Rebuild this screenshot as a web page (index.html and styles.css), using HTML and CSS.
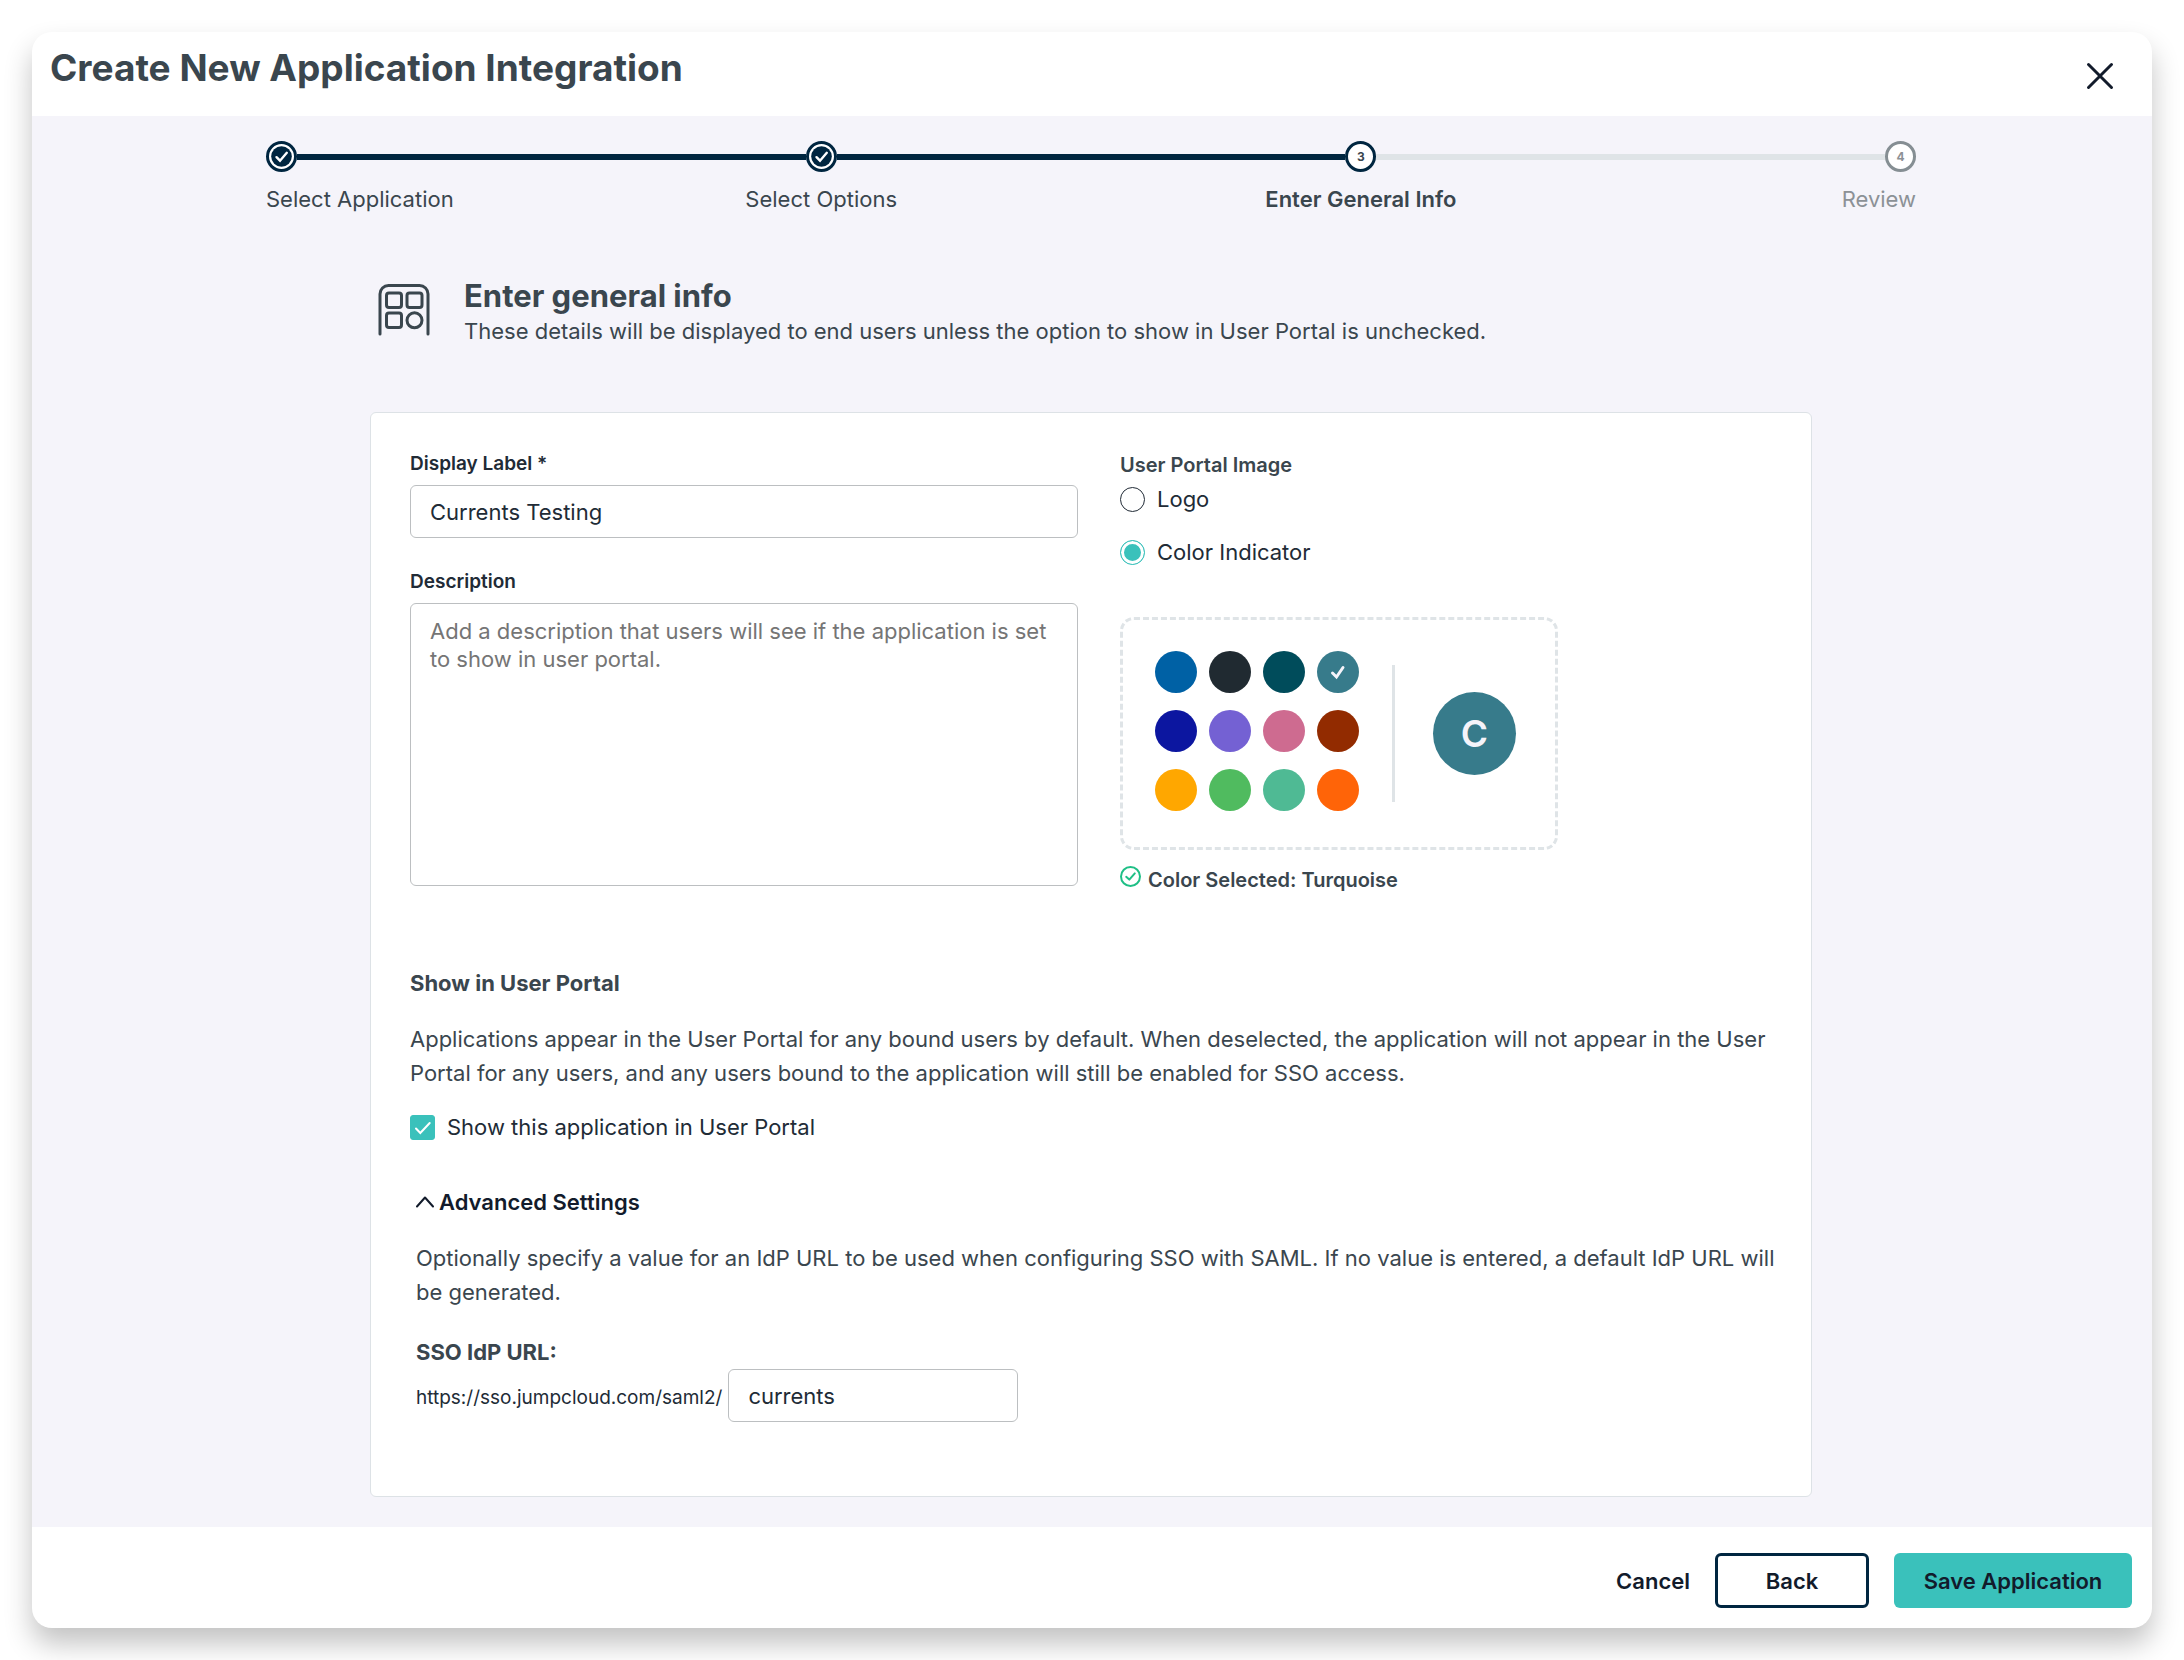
FILE: index.html
```html
<!DOCTYPE html>
<html lang="en">
<head>
<meta charset="utf-8">
<meta name="viewport" content="width=device-width, initial-scale=1">
<title>Create New Application Integration</title>
<link rel="stylesheet" href="styles.css">
</head>
<body>
<form class="modal" onsubmit="return false">
  <header class="modal-header">
    <h1 class="modal-title">Create New Application Integration</h1>
    <button class="close-button" type="button" aria-label="Close">
      <svg width="28" height="28" viewBox="0 0 28 28" fill="none" stroke="currentColor" stroke-width="3" stroke-linecap="round" aria-hidden="true"><path d="M2.500 2.500 25.500 25.500M25.500 2.500 2.500 25.500"/></svg>
    </button>
  </header>

  <main class="modal-body">
    <ol class="stepper">
      <li class="step step-done">
        <svg class="step-dot" viewBox="0 0 31 31" aria-hidden="true"><circle cx="15.500" cy="15.500" r="14" fill="#fff" stroke="#002640" stroke-width="3"/><circle cx="15.500" cy="15.500" r="10.300" fill="#002640"/><path d="M10.500 16.200 14 19.700 20.800 11.800" fill="none" stroke="#fff" stroke-width="2.400" stroke-linecap="round"/></svg>
        <span class="step-label">Select Application</span>
      </li>
      <li class="connector connector-done" aria-hidden="true"></li>
      <li class="step step-done">
        <svg class="step-dot" viewBox="0 0 31 31" aria-hidden="true"><circle cx="15.500" cy="15.500" r="14" fill="#fff" stroke="#002640" stroke-width="3"/><circle cx="15.500" cy="15.500" r="10.300" fill="#002640"/><path d="M10.500 16.200 14 19.700 20.800 11.800" fill="none" stroke="#fff" stroke-width="2.400" stroke-linecap="round"/></svg>
        <span class="step-label">Select Options</span>
      </li>
      <li class="connector connector-done" aria-hidden="true"></li>
      <li class="step step-current" aria-current="step">
        <span class="step-dot">3</span>
        <span class="step-label">Enter General Info</span>
      </li>
      <li class="connector" aria-hidden="true"></li>
      <li class="step step-upcoming">
        <span class="step-dot">4</span>
        <span class="step-label">Review</span>
      </li>
    </ol>

    <div class="content">
      <div class="intro">
        <svg class="intro-icon" viewBox="0 0 52 52" fill="none" stroke="currentColor" stroke-width="3" stroke-linecap="round" aria-hidden="true"><path d="M2 50V10a8.500 8.500 0 0 1 8.500-8.500h31A8.500 8.500 0 0 1 50 10v40"/><rect x="8.500" y="9" width="15" height="14.500" rx="2.500"/><rect x="29" y="9" width="15" height="14.500" rx="2.500"/><rect x="8.500" y="29" width="15" height="14.500" rx="2.500"/><circle cx="36.500" cy="36.300" r="7.500"/></svg>
        <div>
          <h2 class="intro-title">Enter general info</h2>
          <p class="intro-text">These details will be displayed to end users unless the option to show in User Portal is unchecked.</p>
        </div>
      </div>

      <div class="card">
        <div class="columns">
          <div class="column">
            <div class="field">
              <label class="field-label" for="display-label">Display Label *</label>
              <input class="text-input" id="display-label" type="text" value="Currents Testing" required>
            </div>
            <div class="field">
              <label class="field-label" for="description">Description</label>
              <textarea class="text-input text-area" id="description" placeholder="Add a description that users will see if the application is set to show in user portal."></textarea>
            </div>
          </div>

          <div class="column portal-image">
            <fieldset class="choices">
              <legend class="field-label choices-legend">User Portal Image</legend>
              <label class="choice"><input class="radio" type="radio" name="portal-image">Logo</label>
              <label class="choice"><input class="radio" type="radio" name="portal-image" checked>Color Indicator</label>
            </fieldset>
            <div class="color-picker">
              <div class="swatches" role="radiogroup" aria-label="Color">
                <input class="swatch blue" type="radio" name="color" aria-label="Blue">
                <input class="swatch charcoal" type="radio" name="color" aria-label="Charcoal">
                <input class="swatch teal" type="radio" name="color" aria-label="Teal">
                <input class="swatch turquoise" type="radio" name="color" aria-label="Turquoise" checked>
                <input class="swatch navy" type="radio" name="color" aria-label="Navy">
                <input class="swatch purple" type="radio" name="color" aria-label="Purple">
                <input class="swatch pink" type="radio" name="color" aria-label="Pink">
                <input class="swatch brown" type="radio" name="color" aria-label="Brown">
                <input class="swatch yellow" type="radio" name="color" aria-label="Yellow">
                <input class="swatch green" type="radio" name="color" aria-label="Green">
                <input class="swatch mint" type="radio" name="color" aria-label="Mint">
                <input class="swatch orange" type="radio" name="color" aria-label="Orange">
              </div>
              <div class="color-preview"><span class="avatar turquoise">C</span></div>
            </div>
            <p class="color-status">
              <svg width="21" height="21" viewBox="0 0 21 21" fill="none" stroke="#1fbf86" stroke-width="2" stroke-linecap="round" stroke-linejoin="round" aria-hidden="true"><circle cx="10.500" cy="10.500" r="9.500"/><path d="M6.200 10.800 9.300 13.600 14.800 7.400"/></svg>
              <span>Color Selected: Turquoise</span>
            </p>
          </div>
        </div>

        <section class="portal">
          <h3 class="section-title">Show in User Portal</h3>
          <p class="section-text">Applications appear in the User Portal for any bound users by default. When deselected, the application will not appear in the User Portal for any users, and any users bound to the application will still be enabled for SSO access.</p>
          <label class="choice"><input class="checkbox" type="checkbox" checked>Show this application in User Portal</label>
        </section>

        <section class="advanced">
          <button class="disclosure" type="button" aria-expanded="true">
            <svg width="18" height="12" viewBox="0 0 18 12" fill="none" stroke="currentColor" stroke-width="2" stroke-linecap="round" stroke-linejoin="round" aria-hidden="true"><path d="M1 10.500 9 1.500 17 10.500"/></svg>
            Advanced Settings
          </button>
          <p class="section-text">Optionally specify a value for an IdP URL to be used when configuring SSO with SAML. If no value is entered, a default IdP URL will be generated.</p>
          <label class="section-title url-label" for="idp-url">SSO IdP URL:</label>
          <div class="url-row">
            <span class="url-prefix">https://sso.jumpcloud.com/saml2/</span>
            <input class="text-input url-input" id="idp-url" type="text" value="currents">
          </div>
        </section>
      </div>
    </div>
  </main>

  <footer class="modal-footer">
    <button class="button" type="button">Cancel</button>
    <button class="button button-outline" type="button">Back</button>
    <button class="button button-primary" type="submit">Save Application</button>
  </footer>
</form>
</body>
</html>
```
FILE: styles.css
```css
* { box-sizing: border-box; }

body {
  margin: 0;
  padding: 32px;
  background: #fff;
  color: #3a464e;
  font: 400 22px/34px Inter, "Liberation Sans", sans-serif;
}

h1, h2, h3, p, ol, fieldset { margin: 0; padding: 0; border: 0; }

button, input, textarea { font: inherit; color: inherit; }

.modal {
  display: flex;
  flex-direction: column;
  min-height: calc(100vh - 64px);
  border-radius: 20px;
  background: #fff;
  box-shadow: 0 16px 28px rgba(0, 0, 0, .24);
  overflow: hidden;
}

.modal-header {
  display: flex;
  align-items: flex-start;
  justify-content: space-between;
  min-height: 84px;
  padding: 12px 38px 0 18px;
}

.modal-title { font-size: 37px; font-weight: 700; line-height: 48px; }

.close-button {
  display: flex;
  margin-top: 18px;
  padding: 0;
  border: 0;
  background: none;
  color: #121b2b;
  cursor: pointer;
}

.modal-body {
  flex: 1;
  padding: 25px 26px 30px 24px;
  background: #f5f4fa;
}

/* Progress steps */
.stepper {
  display: flex;
  max-width: 1650px;
  margin: 0 auto;
  list-style: none;
}

.step {
  display: flex;
  flex-direction: column;
  align-items: center;
  gap: 10px;
  width: 31px;
  white-space: nowrap;
}

.step:first-child { align-items: flex-start; }
.step:last-child { align-items: flex-end; }

.step-dot { flex: none; width: 31px; height: 31px; }

span.step-dot {
  border: 3px solid #002640;
  border-radius: 50%;
  background: #fff;
  font-size: 12px;
  font-weight: 700;
  line-height: 26px;
  text-align: center;
}

.step-current .step-label { font-weight: 600; }
.step-upcoming { color: #8c9196; }
.step-upcoming .step-dot { border-color: #858e93; }

.connector { flex: 1; height: 6px; margin-top: 13px; background: #dfe4e7; }
.connector-done { background: #002640; }

/* Page introduction */
.content { max-width: 1442px; margin: 0 auto; }

.intro {
  display: flex;
  gap: 34px;
  padding: 62px 8px;
}

.intro-icon { flex: none; width: 52px; height: 52px; margin-top: 6px; }
.intro-title { font-size: 31px; font-weight: 700; line-height: 36px; }
.intro-text { padding-bottom: 2px; }

.card {
  padding: 34px 30px 74px 39px;
  border: 1px solid #dde2e6;
  border-radius: 6px;
  background: #fff;
}

.columns { display: grid; grid-template-columns: 668fr 661fr; gap: 42px; }

/* Form fields */
.field { display: flex; flex-direction: column; gap: 5px; }
.field + .field { margin-top: 27px; }

.field-label {
  color: #212b36;
  font-size: 19px;
  font-weight: 600;
  line-height: 33px;
}

.text-input {
  width: 100%;
  height: 53px;
  padding: 0 19px;
  border: 1px solid #bcbfc1;
  border-radius: 6px;
  background: #fff;
  color: #212b36;
}

.text-area {
  display: block;
  height: 283px;
  padding: 13px 19px;
  line-height: 28px;
  resize: none;
}

.text-area::placeholder { color: #757575; opacity: 1; }

.portal-image { padding-top: 2px; }

.choices-legend { padding: 0; color: #3a464e; font-size: 20px; }

.choice { display: flex; align-items: center; gap: 12px; color: #212b36; }
.choice + .choice { margin-top: 19px; }

.radio, .checkbox, .swatch { flex: none; appearance: none; margin: 0; }

.radio {
  width: 25px;
  height: 25px;
  border: 1px solid #212b36;
  border-radius: 50%;
  background: #fff;
}

.radio:checked {
  border-color: #3ac1bb;
  background: #3ac1bb;
  box-shadow: inset 0 0 0 3px #fff;
}

.checkbox { width: 25px; height: 25px; border: 1px solid #212b36; border-radius: 3px; }

.checkbox:checked {
  border-color: #3ac1bb;
  background: #3ac1bb url("data:image/svg+xml,%3Csvg xmlns='http://www.w3.org/2000/svg' viewBox='0 0 23 23'%3E%3Cpath d='M5 12.500 9.300 17 18.700 7' fill='none' stroke='white' stroke-width='2' stroke-linecap='round'/%3E%3C/svg%3E") center / 100% no-repeat;
}

/* Colour indicator */
.color-picker {
  display: flex;
  align-items: center;
  width: 438px;
  height: 233px;
  margin-top: 48px;
  padding: 0 32px;
  border: 3px dashed #dfe4e7;
  border-radius: 14px;
}

.swatches {
  display: grid;
  grid-template-columns: repeat(4, 42px);
  gap: 17px 12px;
  padding-bottom: 5px;
}

.swatch { width: 42px; height: 42px; border-radius: 50%; }

.swatch:checked {
  background-image: url("data:image/svg+xml,%3Csvg xmlns='http://www.w3.org/2000/svg' viewBox='0 0 42 42'%3E%3Cpath d='M15.500 22 19.500 26 26 16.500' fill='none' stroke='%23f5f4fa' stroke-width='3' stroke-linecap='round'/%3E%3C/svg%3E");
}

.color-preview {
  display: flex;
  align-items: center;
  height: 137px;
  margin-left: 33px;
  padding-left: 38px;
  border-left: 3px solid #dfe4e7;
}

.avatar {
  width: 83px;
  height: 83px;
  border-radius: 50%;
  color: #f5f4fa;
  font-size: 37px;
  font-weight: 600;
  line-height: 83px;
  text-align: center;
}

.blue { background-color: #0061a5; }
.charcoal { background-color: #202a31; }
.teal { background-color: #004c5b; }
.turquoise { background-color: #377b8b; }
.navy { background-color: #0c16a0; }
.purple { background-color: #7461d3; }
.pink { background-color: #ce6b90; }
.brown { background-color: #922b00; }
.yellow { background-color: #ffa700; }
.green { background-color: #50bb5f; }
.mint { background-color: #4fba94; }
.orange { background-color: #ff6408; }

.color-status {
  display: flex;
  gap: 7px;
  margin-top: 16px;
  font-size: 20px;
  font-weight: 600;
  line-height: 29px;
}

/* Portal visibility and advanced settings */
.portal { margin-top: 71px; }
.section-title { font-size: 22px; font-weight: 700; line-height: 34px; }
.section-text { margin: 22px 0 20px; }

.advanced { margin-top: 41px; padding-left: 6px; }

.disclosure {
  display: flex;
  align-items: center;
  gap: 5px;
  padding: 0;
  border: 0;
  background: none;
  color: #121b2b;
  font-weight: 600;
  cursor: pointer;
}

.advanced .section-text { margin-bottom: 26px; }
.url-label { display: block; }
.url-row { display: flex; align-items: baseline; gap: 6px; }
.url-prefix { color: #212b36; font-size: 19px; }
.url-input { width: 290px; }

/* Actions */
.modal-footer {
  display: flex;
  align-items: center;
  justify-content: flex-end;
  gap: 25px;
  min-height: 101px;
  padding: 6px 20px 0 24px;
}

.button {
  height: 55px;
  padding: 0;
  border: 0;
  border-radius: 6px;
  background: none;
  color: #121b2b;
  font-weight: 600;
  cursor: pointer;
}

.button-outline { width: 154px; border: 3px solid #002640; }
.button-primary { width: 238px; background: #3ac1bb; }
```
